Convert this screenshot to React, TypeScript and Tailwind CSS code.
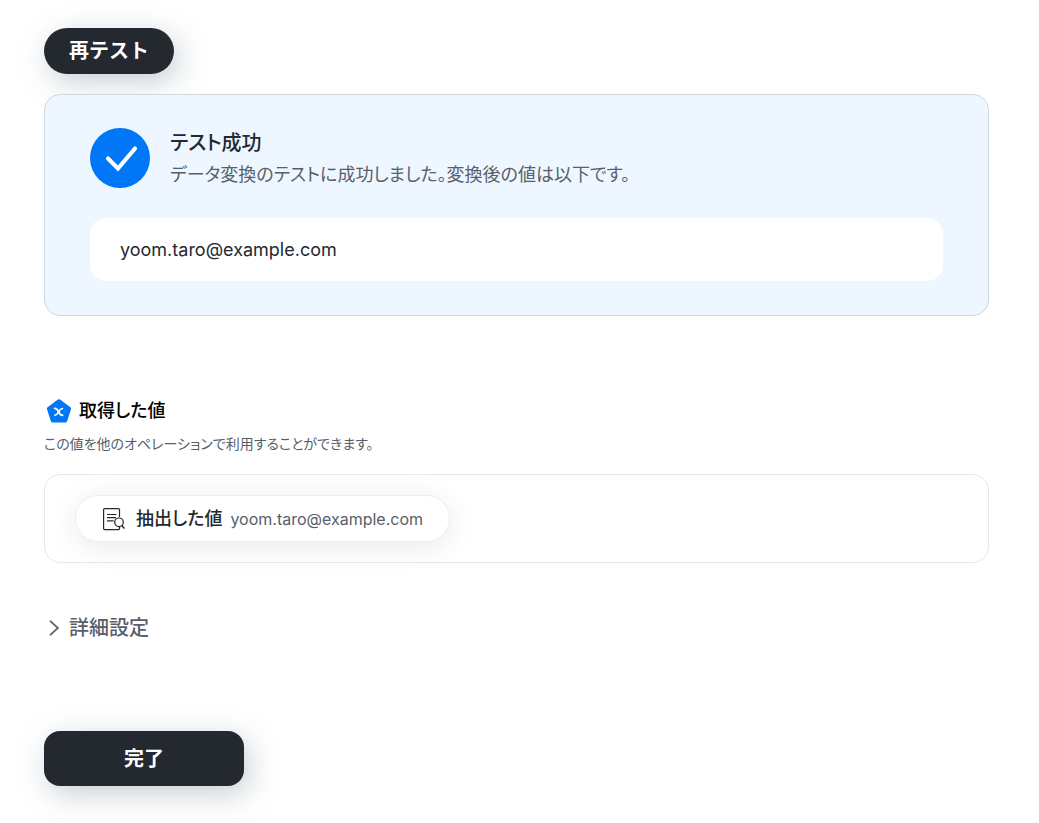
import { useState } from "react";

const extractedValue = "yoom.taro@example.com";

function CheckCircle() {
  return (
    <svg className="size-15 shrink-0" viewBox="0 0 60 60" fill="none" aria-hidden="true">
      <circle cx="30" cy="30" r="30" fill="#0077f6" />
      <path
        d="M18 30.500 28 40.500 45 20.500"
        stroke="#fff"
        strokeWidth="4.2"
        strokeLinecap="round"
      />
    </svg>
  );
}

function OutputIcon() {
  return (
    <svg className="h-6 w-[30px] shrink-0" viewBox="0 0 30 24" fill="none" aria-hidden="true">
      <path
        d="M15 2 25.3 9.6 21.4 21.8H8.6L4.7 9.6Z"
        fill="#0077f6"
        stroke="#0077f6"
        strokeWidth="3.6"
        strokeLinejoin="round"
      />
      <path
        d="M10.700 9.400c2.200 0 2.800 1 3.900 3.400s1.700 3.400 3.900 3.400"
        stroke="#fff"
        strokeWidth="1.900"
        strokeLinecap="round"
      />
      <path
        d="M18.600 9.500c-1.900 0-2.600.9-4 3.300s-2.100 3.300-4 3.300"
        stroke="#fff"
        strokeWidth="1.400"
        strokeLinecap="round"
      />
    </svg>
  );
}

function ExtractIcon() {
  return (
    <svg
      className="size-6 shrink-0"
      viewBox="0 0 24 24"
      fill="none"
      stroke="#24292f"
      strokeWidth="1.2"
      aria-hidden="true"
    >
      <path d="M17.500 10V2.600a1 1 0 0 0-1-1H2.600a1 1 0 0 0-1 1v19a1 1 0 0 0 1 1h13.900a1 1 0 0 0 1-1V20" />
      <path d="M5 7.500h9.500M5 10.700h9M5 13.800h6.500" />
      <circle cx="17" cy="15.300" r="4.300" />
      <path d="m19.800 18.400 2.500 3" strokeWidth="1.500" />
    </svg>
  );
}

export default function App() {
  const [open, setOpen] = useState(false);

  return (
    <main className="pt-7 pr-[50px] pb-9 pl-11 font-['Inter','Noto_Sans_CJK_JP',sans-serif] text-[#24292f]">
      <button
        type="button"
        className="block h-[46px] rounded-full bg-[#24292f] px-[25px] text-xl font-bold text-white shadow-[5px_8px_30px_rgba(110,125,140,0.38)]"
      >
        再テスト
      </button>

      <section className="mt-5 rounded-2xl border border-[#d0d7de] bg-[#eef7ff] px-[45px] pt-[33px] pb-[34px] [font-feature-settings:'palt']">
        <div className="flex gap-5">
          <CheckCircle />
          <div>
            <h2 className="text-xl leading-[30px] font-medium">テスト成功</h2>
            <p className="mt-[3px] text-lg leading-[27px] text-[#57606a]">
              データ変換のテストに成功しました。変換後の値は以下です。
            </p>
          </div>
        </div>
        <div className="mt-[30px] rounded-2xl bg-white px-[30px] py-[18px] text-lg leading-[27px]">
          {extractedValue}
        </div>
      </section>

      <section className="mt-[81px] [font-feature-settings:'palt']">
        <h2 className="flex items-center gap-[5px] text-lg leading-7 font-medium text-black">
          <OutputIcon />
          取得した値
        </h2>
        <p className="mt-[7px] text-sm leading-6 text-[#57606a]">
          この値を他のオペレーションで利用することができます。
        </p>
        <div className="mt-[18px] flex rounded-2xl border border-[#e5e7eb] px-[30px] py-5">
          <div className="flex h-[47px] items-center rounded-full border border-[#eaeef2] bg-white px-[26px] shadow-[0_5px_30px_rgba(0,0,0,0.09)]">
            <ExtractIcon />
            <span className="ml-[10px] text-lg font-medium">抽出した値</span>
            <span className="ml-2 text-base text-[#57606a]">{extractedValue}</span>
          </div>
        </div>
      </section>

      <button
        type="button"
        aria-expanded={open}
        onClick={() => setOpen(!open)}
        className="mt-12 flex items-center gap-[10px] pl-[5px] text-xl leading-[34px] font-medium text-[#57606a]"
      >
        <svg
          className={open ? "h-4 w-[10px] rotate-90" : "h-4 w-[10px]"}
          viewBox="0 0 10 16"
          fill="none"
          stroke="currentColor"
          strokeWidth="1.700"
          aria-hidden="true"
        >
          <path d="m1 .8 8 7.200-8 7.200" />
        </svg>
        詳細設定
      </button>

      <button
        type="button"
        className="mt-[86px] block h-[55px] w-[200px] rounded-2xl bg-[#24292f] text-xl font-bold text-white shadow-[5px_8px_30px_rgba(110,125,140,0.38)]"
      >
        完了
      </button>
    </main>
  );
}
